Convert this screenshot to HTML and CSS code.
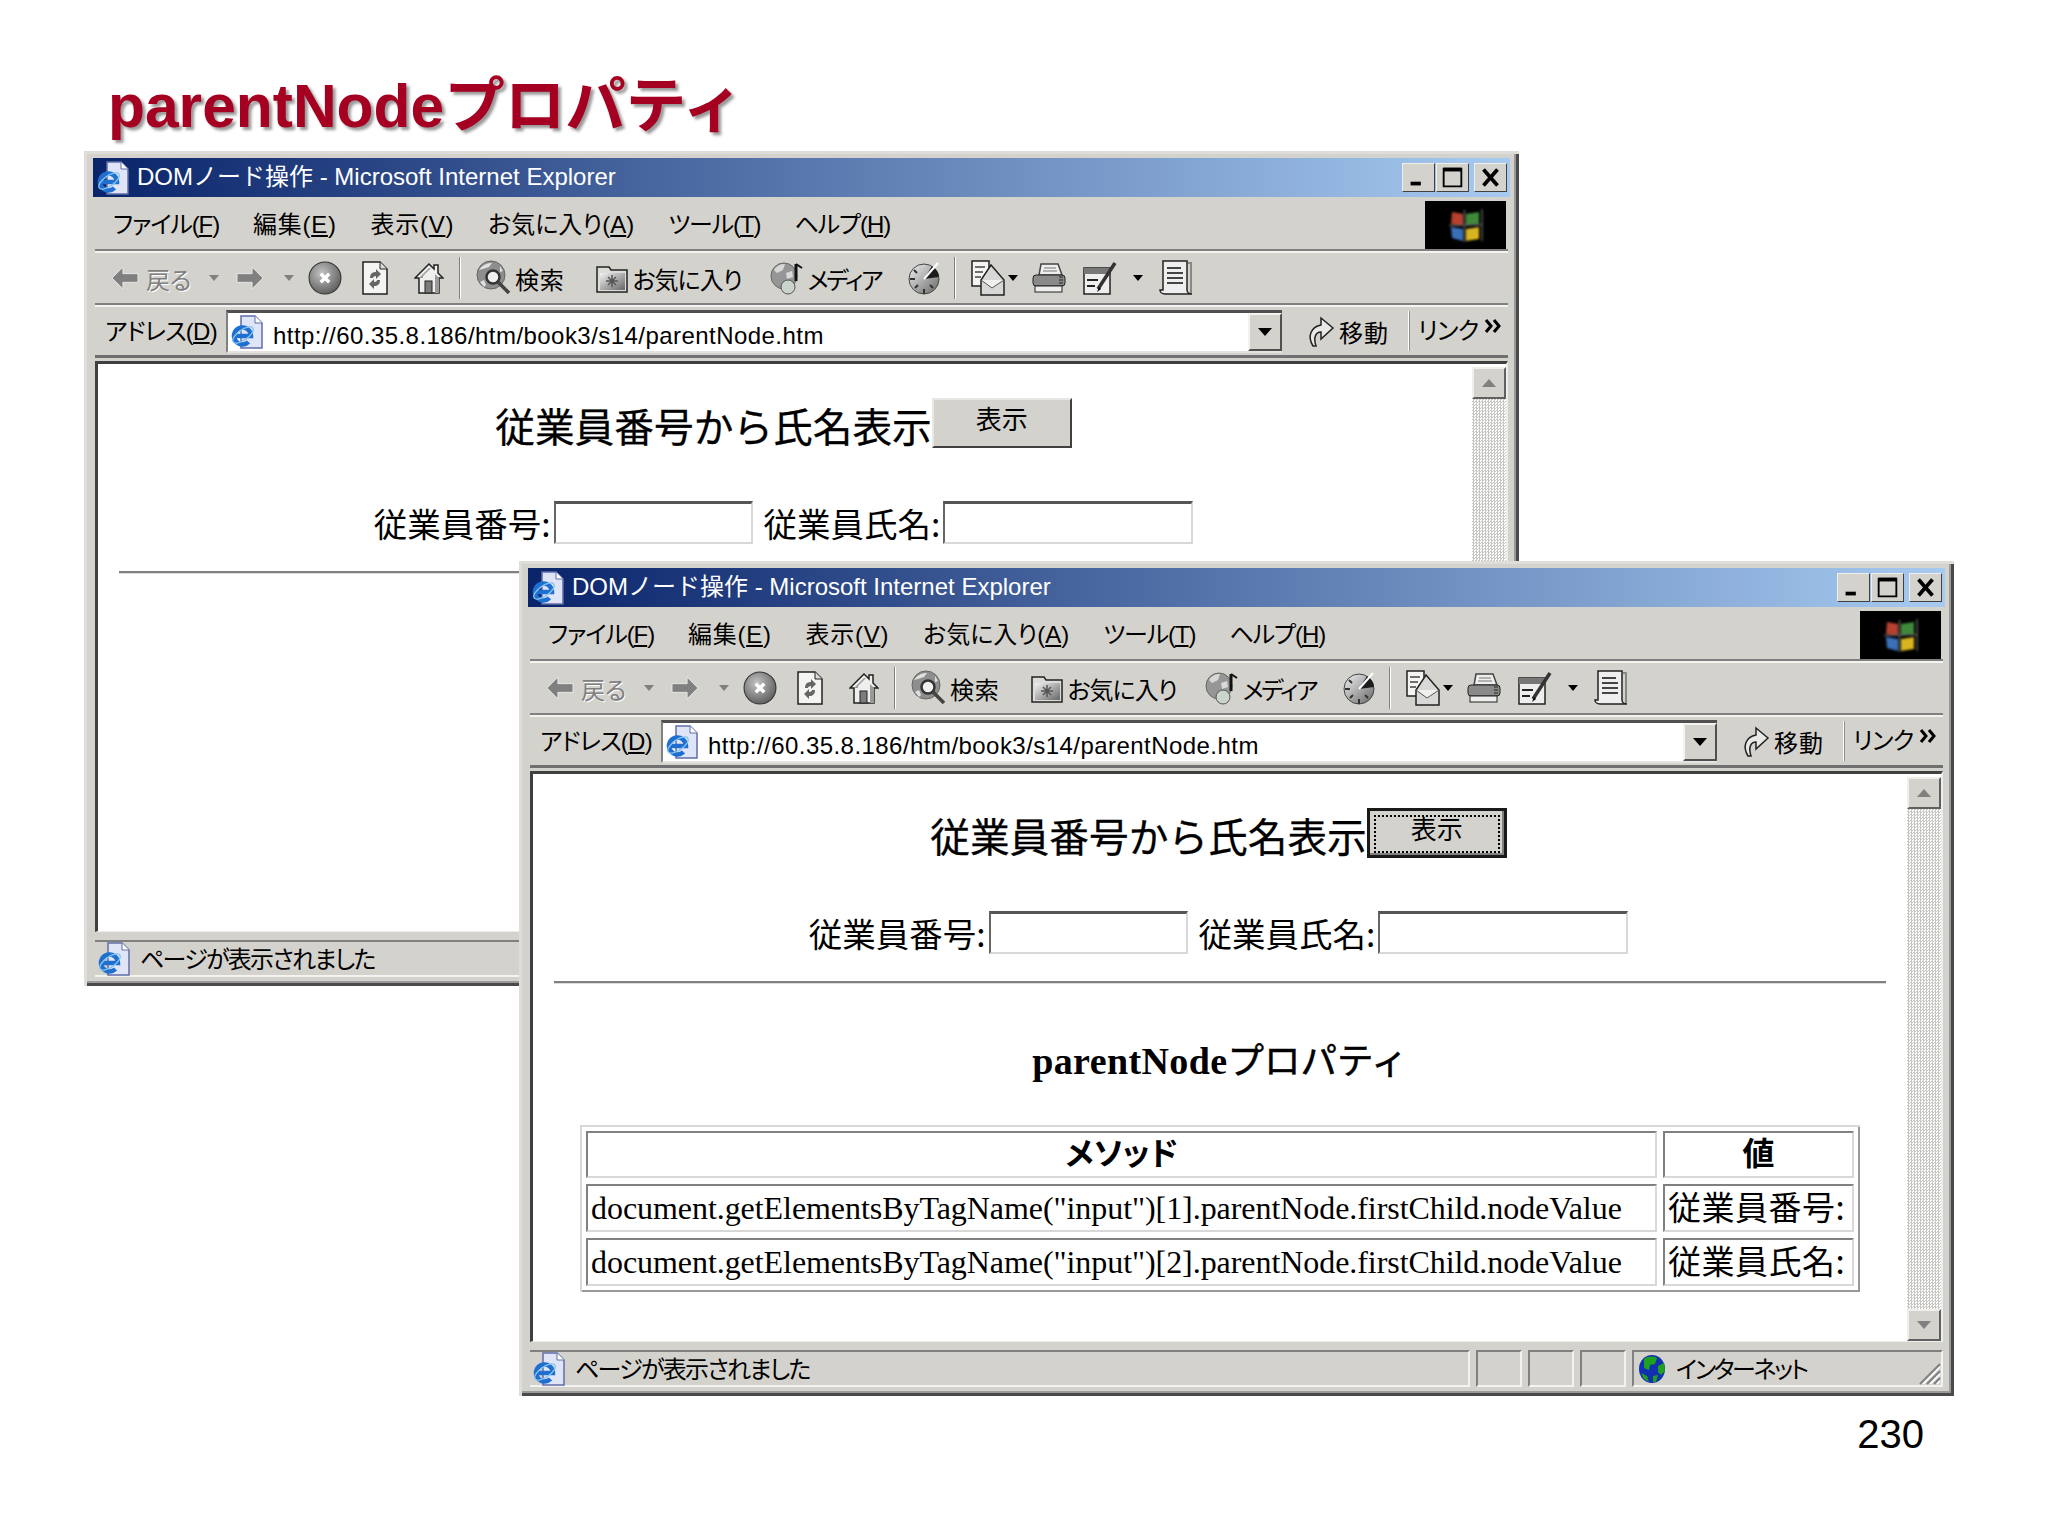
FILE: index.html
```html
<!DOCTYPE html>
<html lang="ja">
<head>
    <meta charset="UTF-8">
    <title>parentNodeプロパティ</title>
    <link rel="stylesheet" href="styles.css">
</head>
<body>
    <!-- Shared toolbar icons -->
    <svg class="icon-defs" aria-hidden="true">
        <defs>
            <radialGradient id="ballGrey" cx="40%" cy="35%" r="70%"><stop offset="0" stop-color="#c4c4c4"/><stop offset="1" stop-color="#5a5a5a"/></radialGradient>
            <linearGradient id="silver" x1="0" y1="0" x2="1" y2="1"><stop offset="0" stop-color="#f2f2f2"/><stop offset="1" stop-color="#666"/></linearGradient>
        </defs>
        <symbol id="i-ie" viewBox="0 0 34 34">
            <path d="M10 1h14l7 7v25H10z" fill="#dfe4f6" stroke="#5f6ea8" stroke-width="1.5"/>
            <path d="M24 1v7h7" fill="#fff" stroke="#5f6ea8"/>
            <path d="M3 21h17a8.5 8.5 0 1 0-2.5 6" fill="none" stroke="#1e6fd0" stroke-width="4.5"/>
            <ellipse cx="12" cy="20" rx="12" ry="5" transform="rotate(-35 12 20)" fill="none" stroke="#86c4f0" stroke-width="1.3"/>
        </symbol>
        <symbol id="i-back" viewBox="0 0 26 22">
            <path d="M1 11L11 1v6h14v8H11v6z" fill="#808080" stroke="#fff" stroke-width=".6"/>
        </symbol>
        <symbol id="i-forward" viewBox="0 0 26 22">
            <path d="M25 11L15 1v6H1v8h14v6z" fill="#808080" stroke="#fff" stroke-width=".6"/>
        </symbol>
        <symbol id="i-stop" viewBox="0 0 32 32">
            <circle cx="16" cy="16" r="15" fill="url(#ballGrey)" stroke="#333"/>
            <path d="M12 12l8 8M20 12l-8 8" stroke="#fff" stroke-width="3.2"/>
        </symbol>
        <symbol id="i-refresh" viewBox="0 0 28 34">
            <path d="M2 1h17l7 7v25H2z" fill="#f4f4f2" stroke="#222" stroke-width="1.5"/>
            <path d="M19 1v7h7" fill="#ddd" stroke="#222"/>
            <path d="M9 17c0-4 2-6 6-6v-3l5 5-5 5v-3c-2 0-3 1-3 2zM19 19c0 4-2 6-6 6v3l-5-5 5-5v3c2 0 3-1 3-2z" fill="#666"/>
        </symbol>
        <symbol id="i-home" viewBox="0 0 30 32">
            <path d="M15 2L1 16h4v15h20V16h4l-5-5V3h-4v4z" fill="#efefed" stroke="#222" stroke-width="1.5"/>
            <path d="M15 6L5 16h4v-2l8-8zM21 12v19h4V16z" fill="#9a9a9a"/>
            <rect x="11" y="19" width="7" height="12" fill="#7c7c7c" stroke="#222"/>
        </symbol>
        <symbol id="i-search" viewBox="0 0 36 36">
            <circle cx="15" cy="15" r="14" fill="#8e8e8e" stroke="#666"/>
            <path d="M3 10c4-6 9-7 13-7l-3 4-6 2zM4 22l4-2 2 5-2 2zM24 6l3 5-3 1z" fill="#e0e0e0"/>
            <circle cx="17" cy="17" r="6.500" fill="#f0f0ee" stroke="#333" stroke-width="2.5"/>
            <path d="M22 22l11 11" stroke="#444" stroke-width="3.5"/>
        </symbol>
        <symbol id="i-favorites" viewBox="0 0 32 30">
            <path d="M1 29V4h12l2 3h16v22z" fill="#dcdcda" stroke="#222" stroke-width="1.5"/>
            <rect x="4" y="10" width="25" height="17" fill="url(#silver)"/>
            <path d="M16 12v12M10 18h12M12 14l8 8M20 14l-8 8" stroke="#555" stroke-width="1.5"/>
        </symbol>
        <symbol id="i-media" viewBox="0 0 34 34">
            <circle cx="14" cy="15" r="13" fill="#969696" stroke="#666"/>
            <path d="M4 9c3-5 7-6 11-6l-2 6-6 3zM16 12l6-2 1 6-6 2z" fill="#d8d8d8"/>
            <path d="M26 3v17" stroke="#111" stroke-width="3"/>
            <path d="M26 3l6 4" stroke="#111" stroke-width="2"/>
            <circle cx="18" cy="26" r="7" fill="#c8d4cc" stroke="#555"/>
        </symbol>
        <symbol id="i-history" viewBox="0 0 34 34">
            <circle cx="17" cy="18" r="15" fill="url(#silver)" stroke="#444"/>
            <path d="M17 18L32 16A15 15 0 0 0 25 5z" fill="#1c1c1c"/>
            <path d="M17 18L31 2" stroke="#fff" stroke-width="2"/>
            <path d="M3 18h5M17 28v5M8 27l3-3M26 27l-3-3M7 9l3 3" stroke="#333" stroke-width="2"/>
        </symbol>
        <symbol id="i-mail" viewBox="0 0 34 36">
            <path d="M1 1h17v25H1z" fill="#f4f4f2" stroke="#222" stroke-width="1.5"/>
            <path d="M4 7h10M4 12h8M4 17h6" stroke="#444" stroke-width="1.5"/>
            <path d="M10 35V20L20 5l13 15v15z" fill="#d8d8d6" stroke="#222" stroke-width="1.5"/>
            <path d="M10 20l11 8 12-8" fill="#f0f0ee" stroke="#555"/>
        </symbol>
        <symbol id="i-print" viewBox="0 0 34 32">
            <path d="M9 2h17l4 11H7z" fill="#eee" stroke="#444" stroke-width="1.5"/>
            <path d="M12 6h12M11 9h14" stroke="#777"/>
            <rect x="1" y="13" width="32" height="11" rx="3" fill="#8a8a8a" stroke="#222"/>
            <path d="M27 15h4M27 18h4M27 21h4" stroke="#222"/>
            <rect x="3" y="24" width="27" height="6" fill="#eee" stroke="#222"/>
        </symbol>
        <symbol id="i-edit" viewBox="0 0 34 34">
            <rect x="1" y="7" width="26" height="26" fill="#eee" stroke="#222" stroke-width="1.5"/>
            <rect x="1" y="7" width="26" height="6" fill="#777"/>
            <path d="M4 19h11M4 25h8" stroke="#222" stroke-width="2"/>
            <path d="M15 28L32 2" stroke="#333" stroke-width="3.5"/>
            <path d="M16 26l2 2-4 3z" fill="#000"/>
        </symbol>
        <symbol id="i-discuss" viewBox="0 0 34 36">
            <path d="M4 1h24v29c0 3 3 4 5 4H6c-3 0-5-2-5-4h3z" fill="#eee" stroke="#222" stroke-width="1.5"/>
            <path d="M29 3h3v30" fill="none" stroke="#888" stroke-width="2"/>
            <path d="M8 8h14M8 13h16M8 18h16M8 23h16" stroke="#444" stroke-width="1.8"/>
        </symbol>
        <symbol id="i-go" viewBox="0 0 28 34">
            <path d="M6 32C0 22 4 13 14 11V4l12 10-12 11v-7c-5 0-8 5-5 14z" fill="#e8e8e6" stroke="#222" stroke-width="1.5"/>
        </symbol>
        <symbol id="i-chevrons" viewBox="0 0 18 14">
            <path d="M2 1l5 6-5 6M10 1l5 6-5 6" fill="none" stroke="#000" stroke-width="3"/>
        </symbol>
        <symbol id="i-flag" viewBox="0 0 40 36">
            <path d="M6 5l11 2v12L5 17z" fill="#b8402e"/>
            <path d="M20 7l13-2v12l-13 2z" fill="#3f8a3a"/>
            <path d="M5 20l12 2v12L6 31z" fill="#3a70b8"/>
            <path d="M20 22l13-2v12l-13 2z" fill="#d8b420"/>
            <path d="M18.500 3v32M3 18.500l33-1M36 2v32" stroke="#5a5a5a" stroke-width="1.5" fill="none"/>
        </symbol>
        <symbol id="i-globe" viewBox="0 0 28 30">
            <ellipse cx="14" cy="15" rx="13" ry="14" fill="#1030b0"/>
            <path d="M6 5c4-3 9-3 13-1l-2 6-5 1-1 5-5-2zM20 12l6-3 1 8-4 4-3-3zM3 19l6 3 2 6-5-3zM15 22l5-1-2 7-3 0z" fill="#20a020"/>
        </symbol>
        <symbol id="i-grip" viewBox="0 0 24 24">
            <path d="M23 3L3 23M23 10L10 23M23 17l-6 6" stroke="#808080" stroke-width="2"/>
            <path d="M23 6L6 23M23 13L13 23M23 20l-3 3" stroke="#fff" stroke-width="1.5"/>
        </symbol>
    </svg>

    <main class="slide">
        <h1 class="slide-title">parentNodeプロパティ</h1>

        <div class="desktop">
            <!-- Back window: page before the button is pressed -->
            <section class="window window-back">
                <div class="titlebar">
                    <svg class="title-icon"><use href="#i-ie"/></svg>
                    <span class="title-text">DOMノード操作 - Microsoft Internet Explorer</span>
                    <span class="win-btn"><svg viewBox="0 0 33 29"><rect x="8" y="19" width="11" height="4"/></svg></span>
                    <span class="win-btn"><svg viewBox="0 0 33 29"><path d="M7 5h19v19H7z" fill="none" stroke="#000" stroke-width="2"/><path d="M7 6h19" stroke="#000" stroke-width="4"/></svg></span>
                    <span class="win-btn win-close"><svg viewBox="0 0 33 29"><path d="M9 6l15 17M24 6L9 23" stroke="#000" stroke-width="4"/></svg></span>
                </div>
                <div class="menubar">
                    <nav class="menu-items">
                        <span class="menu-kana">ファイル(<u>F</u>)</span>
                        <span class="menu-kanji">編集(<u>E</u>)</span>
                        <span class="menu-kanji">表示(<u>V</u>)</span>
                        <span>お気に入り(<u>A</u>)</span>
                        <span class="menu-kana">ツール(<u>T</u>)</span>
                        <span class="menu-kana">ヘルプ(<u>H</u>)</span>
                    </nav>
                    <div class="brand"><svg><use href="#i-flag"/></svg></div>
                </div>
                <div class="toolbar">
                    <svg class="tb-back"><use href="#i-back"/></svg>
                    <span class="tb-label label-back">戻る</span>
                    <i class="caret caret-grey caret-back"></i>
                    <svg class="tb-forward"><use href="#i-forward"/></svg>
                    <i class="caret caret-grey caret-forward"></i>
                    <svg class="tb-stop"><use href="#i-stop"/></svg>
                    <svg class="tb-refresh"><use href="#i-refresh"/></svg>
                    <svg class="tb-home"><use href="#i-home"/></svg>
                    <i class="tb-sep sep-first"></i>
                    <svg class="tb-search"><use href="#i-search"/></svg>
                    <span class="tb-label label-search">検索</span>
                    <svg class="tb-favorites"><use href="#i-favorites"/></svg>
                    <span class="tb-label label-favorites">お気に入り</span>
                    <svg class="tb-media"><use href="#i-media"/></svg>
                    <span class="tb-label label-media">メディア</span>
                    <svg class="tb-history"><use href="#i-history"/></svg>
                    <i class="tb-sep sep-second"></i>
                    <svg class="tb-mail"><use href="#i-mail"/></svg>
                    <i class="caret caret-mail"></i>
                    <svg class="tb-print"><use href="#i-print"/></svg>
                    <svg class="tb-edit"><use href="#i-edit"/></svg>
                    <i class="caret caret-edit"></i>
                    <svg class="tb-discuss"><use href="#i-discuss"/></svg>
                </div>
                <div class="addressbar">
                    <span class="address-label">アドレス(<u>D</u>)</span>
                    <div class="address-field">
                        <svg class="address-icon"><use href="#i-ie"/></svg>
                        <span class="address-url">http://60.35.8.186/htm/book3/s14/parentNode.htm</span>
                        <span class="combo-btn"><i class="caret caret-black"></i></span>
                    </div>
                    <svg class="go-icon"><use href="#i-go"/></svg>
                    <span class="go-label">移動</span>
                    <span class="links-label">リンク</span>
                    <svg class="links-more"><use href="#i-chevrons"/></svg>
                </div>
                <div class="page-frame">
                    <div class="page">
                        <div class="heading-row">
                            <span class="heading">従業員番号から氏名表示</span>
                            <button class="show-btn">表示</button>
                        </div>
                        <div class="form-row">
                            <label class="field-label">従業員番号:</label>
                            <input class="field field-number" type="text">
                            <label class="field-label field-label-name">従業員氏名:</label>
                            <input class="field field-name" type="text">
                        </div>
                        <hr class="rule">
                    </div>
                    <div class="scrollbar">
                        <span class="scroll-btn"><i class="arrow-up"></i></span>
                        <div class="scroll-track"></div>
                        <span class="scroll-btn"><i class="arrow-down"></i></span>
                    </div>
                </div>
                <div class="statusbar">
                    <div class="status-main">
                        <svg class="status-icon"><use href="#i-ie"/></svg>
                        <span>ページが表示されました</span>
                    </div>
                    <div class="status-cell"></div>
                    <div class="status-cell"></div>
                    <div class="status-cell"></div>
                    <div class="status-zone">
                        <svg class="zone-icon"><use href="#i-globe"/></svg>
                        <span>インターネット</span>
                        <svg class="grip"><use href="#i-grip"/></svg>
                    </div>
                </div>
            </section>

            <!-- Front window: result table shown -->
            <section class="window window-front">
                <div class="titlebar">
                    <svg class="title-icon"><use href="#i-ie"/></svg>
                    <span class="title-text">DOMノード操作 - Microsoft Internet Explorer</span>
                    <span class="win-btn"><svg viewBox="0 0 33 29"><rect x="8" y="19" width="11" height="4"/></svg></span>
                    <span class="win-btn"><svg viewBox="0 0 33 29"><path d="M7 5h19v19H7z" fill="none" stroke="#000" stroke-width="2"/><path d="M7 6h19" stroke="#000" stroke-width="4"/></svg></span>
                    <span class="win-btn win-close"><svg viewBox="0 0 33 29"><path d="M9 6l15 17M24 6L9 23" stroke="#000" stroke-width="4"/></svg></span>
                </div>
                <div class="menubar">
                    <nav class="menu-items">
                        <span class="menu-kana">ファイル(<u>F</u>)</span>
                        <span class="menu-kanji">編集(<u>E</u>)</span>
                        <span class="menu-kanji">表示(<u>V</u>)</span>
                        <span>お気に入り(<u>A</u>)</span>
                        <span class="menu-kana">ツール(<u>T</u>)</span>
                        <span class="menu-kana">ヘルプ(<u>H</u>)</span>
                    </nav>
                    <div class="brand"><svg><use href="#i-flag"/></svg></div>
                </div>
                <div class="toolbar">
                    <svg class="tb-back"><use href="#i-back"/></svg>
                    <span class="tb-label label-back">戻る</span>
                    <i class="caret caret-grey caret-back"></i>
                    <svg class="tb-forward"><use href="#i-forward"/></svg>
                    <i class="caret caret-grey caret-forward"></i>
                    <svg class="tb-stop"><use href="#i-stop"/></svg>
                    <svg class="tb-refresh"><use href="#i-refresh"/></svg>
                    <svg class="tb-home"><use href="#i-home"/></svg>
                    <i class="tb-sep sep-first"></i>
                    <svg class="tb-search"><use href="#i-search"/></svg>
                    <span class="tb-label label-search">検索</span>
                    <svg class="tb-favorites"><use href="#i-favorites"/></svg>
                    <span class="tb-label label-favorites">お気に入り</span>
                    <svg class="tb-media"><use href="#i-media"/></svg>
                    <span class="tb-label label-media">メディア</span>
                    <svg class="tb-history"><use href="#i-history"/></svg>
                    <i class="tb-sep sep-second"></i>
                    <svg class="tb-mail"><use href="#i-mail"/></svg>
                    <i class="caret caret-mail"></i>
                    <svg class="tb-print"><use href="#i-print"/></svg>
                    <svg class="tb-edit"><use href="#i-edit"/></svg>
                    <i class="caret caret-edit"></i>
                    <svg class="tb-discuss"><use href="#i-discuss"/></svg>
                </div>
                <div class="addressbar">
                    <span class="address-label">アドレス(<u>D</u>)</span>
                    <div class="address-field">
                        <svg class="address-icon"><use href="#i-ie"/></svg>
                        <span class="address-url">http://60.35.8.186/htm/book3/s14/parentNode.htm</span>
                        <span class="combo-btn"><i class="caret caret-black"></i></span>
                    </div>
                    <svg class="go-icon"><use href="#i-go"/></svg>
                    <span class="go-label">移動</span>
                    <span class="links-label">リンク</span>
                    <svg class="links-more"><use href="#i-chevrons"/></svg>
                </div>
                <div class="page-frame">
                    <div class="page">
                        <div class="heading-row">
                            <span class="heading">従業員番号から氏名表示</span>
                            <button class="show-btn show-btn-focus"><span>表示</span></button>
                        </div>
                        <div class="form-row">
                            <label class="field-label">従業員番号:</label>
                            <input class="field field-number" type="text">
                            <label class="field-label field-label-name">従業員氏名:</label>
                            <input class="field field-name" type="text">
                        </div>
                        <hr class="rule">
                        <h3 class="result-title"><b>parentNode</b>プロパティ</h3>
                        <table class="result-table">
                            <colgroup><col class="col-method"><col class="col-value"></colgroup>
                            <tr><th>メソッド</th><th class="th-value">値</th></tr>
                            <tr><td>document.getElementsByTagName("input")[1].parentNode.firstChild.nodeValue</td><td class="td-value">従業員番号:</td></tr>
                            <tr><td>document.getElementsByTagName("input")[2].parentNode.firstChild.nodeValue</td><td class="td-value">従業員氏名:</td></tr>
                        </table>
                    </div>
                    <div class="scrollbar">
                        <span class="scroll-btn"><i class="arrow-up"></i></span>
                        <div class="scroll-track"></div>
                        <span class="scroll-btn"><i class="arrow-down"></i></span>
                    </div>
                </div>
                <div class="statusbar">
                    <div class="status-main">
                        <svg class="status-icon"><use href="#i-ie"/></svg>
                        <span>ページが表示されました</span>
                    </div>
                    <div class="status-cell"></div>
                    <div class="status-cell"></div>
                    <div class="status-cell"></div>
                    <div class="status-zone">
                        <svg class="zone-icon"><use href="#i-globe"/></svg>
                        <span>インターネット</span>
                        <svg class="grip"><use href="#i-grip"/></svg>
                    </div>
                </div>
            </section>
        </div>

        <div class="page-number">230</div>
    </main>
</body>
</html>
```

FILE: styles.css
```css
/* General Styles */
body {
    margin: 0;
    background-color: #fff;
    font-family: "Liberation Sans", "Noto Sans CJK JP", sans-serif;
    color: #000;
}

.icon-defs {
    display: block;
    width: 0;
    height: 0;
}

svg {
    display: block;
}

/* Slide */
.slide {
    width: 2048px;
    height: 1536px;
    overflow: hidden;
}

.slide-title {
    margin: 0;
    height: 151px;
    box-sizing: border-box;
    padding: 68px 0 0 108px;
    font-size: 60.5px;
    line-height: 76px;
    font-weight: bold;
    color: #a50021;
    text-shadow: 3px 3px 3px #999;
    white-space: nowrap;
}

.desktop {
    position: relative;
    height: 1245px;
}

.page-number {
    margin-top: 15px;
    padding-right: 124px;
    text-align: right;
    font-size: 40px;
    line-height: 46px;
}

/* Window chrome */
.window {
    position: absolute;
    width: 1435px;
    height: 835px;
    box-sizing: border-box;
    padding: 7px 9px 9px 9px;
    display: flex;
    flex-direction: column;
    background-color: #d4d2cd;
    box-shadow: inset 3px 3px 0 #dedddA, inset -3px -3px 0 #4a4a4a, inset -5px -5px 0 #9a9a9a;
}

.window-back {
    left: 84px;
    top: 0;
}

.window-front {
    left: 519px;
    top: 410px;
}

.titlebar {
    height: 39px;
    flex: none;
    display: flex;
    align-items: center;
    background: linear-gradient(90deg, #0a246a, #a6caf0);
    color: #fff;
}

.title-icon {
    width: 34px;
    height: 34px;
    margin-left: 4px;
}

.title-text {
    margin-left: 6px;
    margin-right: auto;
    padding-bottom: 1px;
    font-size: 24px;
    line-height: 30px;
    white-space: nowrap;
}

.win-btn {
    width: 33px;
    height: 29px;
    margin-right: 1px;
    box-sizing: border-box;
    background-color: #d4d2cd;
    border: 1px solid;
    border-color: #f0efeb #404040 #404040 #f0efeb;
}

.win-btn svg {
    width: 31px;
    height: 27px;
}

.win-close {
    margin-left: 4px;
    margin-right: 3px;
}

.menubar {
    margin: 4px 2px 0;
    height: 50px;
    flex: none;
    box-sizing: border-box;
    display: flex;
    justify-content: space-between;
    border-bottom: 2px solid #808080;
}

.menu-items {
    display: flex;
    align-items: center;
    gap: 34px;
    padding: 0 0 5px 18px;
    font-size: 24px;
    font-feature-settings: "palt";
    white-space: nowrap;
}

.menu-kana {
    letter-spacing: -1.1px;
}

.menu-kanji {
    letter-spacing: 0.7px;
}

.brand {
    width: 81px;
    height: 48px;
    margin-right: 2px;
    display: flex;
    align-items: center;
    justify-content: center;
    background-color: #000;
}

.brand svg {
    width: 40px;
    height: 36px;
    filter: blur(0.8px);
}

/* Toolbar */
.toolbar {
    margin: 0 2px;
    height: 54px;
    flex: none;
    box-sizing: border-box;
    display: flex;
    align-items: center;
    border-top: 2px solid #f4f3ef;
    border-bottom: 2px solid #808080;
}

.tb-label {
    font-size: 24px;
    font-feature-settings: "palt";
    white-space: nowrap;
}

.tb-back { width: 28px; height: 24px; margin-left: 16px; }
.label-back { width: 43px; margin-left: 7px; color: #808080; text-shadow: 1px 1px 0 #fff; }
.caret-back { margin-left: 20px; }
.tb-forward { width: 28px; height: 24px; margin-left: 17px; }
.caret-forward { margin-left: 20px; }
.tb-stop { width: 34px; height: 34px; margin-left: 14px; }
.tb-refresh { width: 28px; height: 34px; margin-left: 19px; }
.tb-home { width: 30px; height: 32px; margin-left: 25px; }
.sep-first { margin-left: 15px; }
.tb-search { width: 36px; height: 36px; margin-left: 15px; }
.label-search { width: 48px; margin-left: 3px; letter-spacing: 0.8px; }
.tb-favorites { width: 32px; height: 30px; margin-left: 32.5px; }
.label-favorites { width: 107px; margin-left: 5px; letter-spacing: -1px; }
.tb-media { width: 34px; height: 34px; margin-left: 30px; }
.label-media { width: 71px; margin-left: 4px; letter-spacing: -2.2px; }
.tb-history { width: 34px; height: 34px; margin-left: 28px; }
.sep-second { margin-left: 13px; }
.tb-mail { width: 34px; height: 36px; margin-left: 15px; }
.caret-mail { margin-left: 3px; }
.tb-print { width: 34px; height: 32px; margin-left: 14px; }
.tb-edit { width: 34px; height: 34px; margin-left: 17px; }
.caret-edit { margin-left: 16px; }
.tb-discuss { width: 34px; height: 36px; margin-left: 16px; }

.tb-sep {
    width: 1px;
    height: 42px;
    background-color: #808080;
    border-right: 1px solid #fff;
}

.caret {
    width: 0;
    height: 0;
    flex: none;
    border-left: 5px solid transparent;
    border-right: 5px solid transparent;
    border-top: 6px solid #000;
}

.caret-grey {
    border-top-color: #808080;
}

/* Address bar */
.addressbar {
    margin: 0 2px;
    height: 53px;
    flex: none;
    box-sizing: border-box;
    display: flex;
    align-items: center;
    border-top: 2px solid #f4f3ef;
    border-bottom: 3px solid #707070;
    font-size: 24px;
    font-feature-settings: "palt";
}

.address-label {
    width: 131px;
    padding: 0 0 3px 10px;
    box-sizing: border-box;
    letter-spacing: -0.8px;
    white-space: nowrap;
}

.address-field {
    width: 1056px;
    height: 43px;
    box-sizing: border-box;
    display: flex;
    align-items: center;
    background-color: #fff;
    border-top: 3px solid #505050;
    border-left: 2px solid #808080;
    border-bottom: 2px solid #e4e3df;
}

.address-icon {
    width: 34px;
    height: 34px;
    margin-left: 3px;
}

.address-url {
    margin-left: 8px;
    margin-right: auto;
    padding-top: 8px;
    line-height: 28px;
    letter-spacing: 0.45px;
    white-space: nowrap;
}

.combo-btn {
    width: 34px;
    height: 38px;
    flex: none;
    box-sizing: border-box;
    display: flex;
    align-items: center;
    justify-content: center;
    background-color: #d4d2cd;
    border: 2px solid;
    border-color: #f4f3ef #505050 #505050 #f4f3ef;
}

.caret-black {
    border-left-width: 7px;
    border-right-width: 7px;
    border-top-width: 8px;
}

.go-icon {
    width: 28px;
    height: 34px;
    margin-left: 25px;
}

.go-label {
    margin-left: 4px;
    width: 70px;
    letter-spacing: 1px;
    white-space: nowrap;
}

.links-label {
    width: 75px;
    padding-left: 8px;
    box-sizing: border-box;
    border-left: 1px solid #909090;
    box-shadow: -1px 0 0 #fff;
    line-height: 40px;
    letter-spacing: -0.6px;
    white-space: nowrap;
}

.links-more {
    width: 18px;
    height: 14px;
    margin-bottom: 10px;
}

/* Browser page area */
.page-frame {
    margin: 3px 2px 0;
    height: 571px;
    flex: none;
    box-sizing: border-box;
    display: flex;
    background-color: #fff;
    border-top: 3px solid #404040;
    border-left: 3px solid #404040;
    border-right: 2px solid #eeedea;
    border-bottom: 1px solid #eeedea;
}

.page {
    flex: 1;
    min-width: 0;
    display: flex;
    flex-direction: column;
    align-items: center;
    font-family: "Liberation Serif", "Noto Sans CJK JP", serif;
}

.heading-row {
    margin: 34px 3px 0 0;
    height: 50px;
    display: flex;
    align-items: center;
}

.heading {
    padding-top: 3px;
    font-family: "Noto Sans CJK JP", sans-serif;
    font-size: 39.7px;
    line-height: 44px;
    -webkit-text-stroke: 0.3px #000;
    white-space: nowrap;
}

.show-btn {
    width: 140px;
    height: 50px;
    padding: 0 0 10px;
    box-sizing: border-box;
    background-color: #d4d2cd;
    border: 2px solid;
    border-color: #e8e7e3 #404040 #404040 #e8e7e3;
    font-family: "Noto Sans CJK JP", sans-serif;
    font-size: 26px;
    line-height: 30px;
    color: #000;
}

.show-btn-focus {
    padding: 4px;
    border: 3px solid #1a1a1a;
    box-shadow: inset -2px -2px 0 #808080;
}

.show-btn-focus span {
    display: block;
    height: 34px;
    line-height: 22px;
    border: 2px dotted #000;
}

.form-row {
    margin: 53px 3px 0 0;
    display: flex;
    align-items: center;
}

.field-label {
    font-family: "Noto Sans CJK JP", sans-serif;
    font-size: 33.5px;
    line-height: 43px;
    color: #000;
    white-space: nowrap;
}

.field-label-name {
    margin-left: 11px;
}

.field {
    height: 43px;
    margin: 0 0 0 3px;
    padding: 0;
    box-sizing: border-box;
    background-color: #fff;
    border-style: solid;
    border-width: 3px 2px 2px 2px;
    border-color: #555 #d8d8d8 #d8d8d8 #666;
}

.field-number {
    width: 199px;
}

.field-name {
    width: 250px;
}

.rule {
    width: 1332px;
    height: 0;
    margin: 27px 0 0;
    border: 0;
    border-top: 2px solid #808080;
    border-bottom: 1px solid #ddd;
}

.result-title {
    margin: 53px 0 0;
    font-family: "Noto Sans CJK JP", sans-serif;
    font-size: 36.5px;
    line-height: 44px;
    font-weight: normal;
    -webkit-text-stroke: 0.5px #000;
    white-space: nowrap;
}

.result-title b {
    font-family: "Liberation Serif", serif;
    font-size: 38px;
    letter-spacing: 0.4px;
    -webkit-text-stroke: 0;
}

.result-table {
    width: 1280px;
    margin-top: 42px;
    table-layout: fixed;
    border-collapse: separate;
    border-spacing: 6px;
    box-shadow: inset 2px 2px 0 #d8d8d8, inset -2px -2px 0 #999;
    font-size: 32px;
    line-height: 36px;
    letter-spacing: -0.06px;
}

.col-value {
    width: 191px;
}

.result-table th,
.result-table td {
    padding: 0 3px;
    box-sizing: border-box;
    border: 2px solid;
    border-color: #808080 #d8d8d8 #d8d8d8 #808080;
    white-space: nowrap;
}

.result-table th {
    height: 47px;
    padding-bottom: 8px;
    font-family: "Noto Sans CJK JP", sans-serif;
    font-feature-settings: "palt";
    font-size: 32px;
    line-height: 34px;
}

.result-table td {
    height: 48px;
}

.result-table .td-value {
    padding-bottom: 5px;
    font-family: "Noto Sans CJK JP", sans-serif;
    font-size: 33px;
    letter-spacing: 0.5px;
}

/* Scrollbar */
.scrollbar {
    width: 34px;
    flex: none;
    display: flex;
    flex-direction: column;
    margin-top: 3px;
    margin-bottom: 0;
}

.scroll-btn {
    height: 32px;
    flex: none;
    box-sizing: border-box;
    display: flex;
    align-items: center;
    justify-content: center;
    background-color: #d4d2cd;
    border: 2px solid;
    border-color: #f0efeb #606060 #606060 #f0efeb;
}

.scroll-track {
    flex: 1;
    background: repeating-conic-gradient(#c8c6c0 0 25%, #fff 0 50%) 0 0 / 3px 3px;
}

.arrow-up,
.arrow-down {
    width: 0;
    height: 0;
    border-left: 7px solid transparent;
    border-right: 7px solid transparent;
}

.arrow-up {
    border-bottom: 8px solid #808080;
}

.arrow-down {
    border-top: 8px solid #808080;
}

/* Status bar */
.statusbar {
    margin: 8px 2px 0;
    height: 37px;
    flex: none;
    box-sizing: border-box;
    display: flex;
    gap: 6px;
    font-size: 24px;
    font-feature-settings: "palt";
}

.status-main,
.status-cell,
.status-zone {
    box-sizing: border-box;
    display: flex;
    align-items: center;
    border: 2px solid;
    border-color: #808080 #f4f3ef #f4f3ef #808080;
    white-space: nowrap;
}

.status-main {
    width: 940px;
    border-left: 0;
}

.status-icon {
    width: 34px;
    height: 34px;
    margin-left: 3px;
}

.status-main span {
    margin-left: 8px;
    padding-bottom: 2px;
    letter-spacing: -1.7px;
}

.status-cell {
    width: 46px;
}

.status-zone {
    flex: 1;
    min-width: 0;
}

.zone-icon {
    width: 28px;
    height: 30px;
    margin-left: 4px;
}

.status-zone span {
    margin-left: 10px;
    margin-right: auto;
    padding-bottom: 2px;
    letter-spacing: -2.4px;
}

.grip {
    width: 24px;
    height: 24px;
    align-self: flex-end;
}
```
